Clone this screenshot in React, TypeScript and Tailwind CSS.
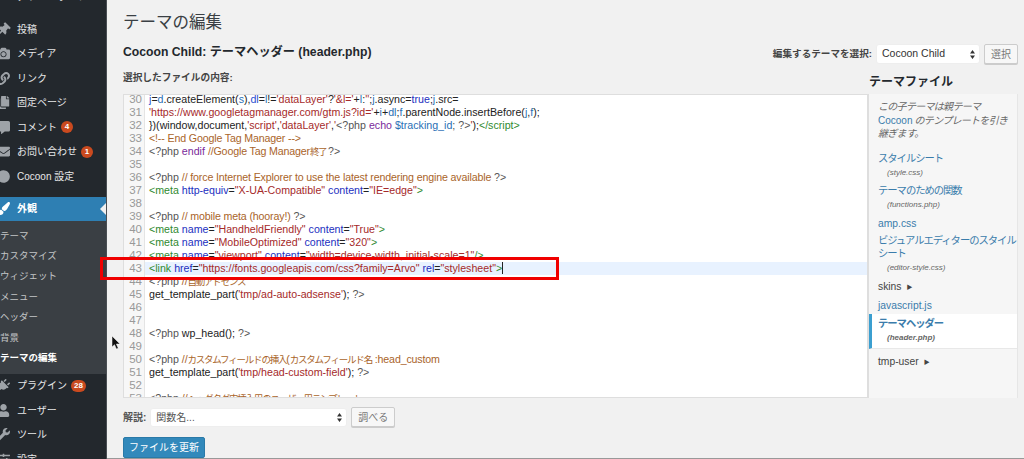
import type { ReactNode } from 'react';
import {
  FaThumbtack,
  FaCamera,
  FaLink,
  FaCopy,
  FaCommentAlt,
  FaEnvelope,
  FaCircle,
  FaPaintBrush,
  FaPlug,
  FaUser,
  FaWrench,
  FaSlidersH,
} from 'react-icons/fa';

// ============================================
// Data
// ============================================

const FONT = "font-['Liberation_Sans','Noto_Sans_CJK_JP',sans-serif]";

type Kind = 'plain' | 'meta' | 'comment' | 'cjk' | 'tag' | 'attr' | 'str' | 'kw' | 'var' | 'def';

const KIND_CLASS: Record<Kind, string> = {
  plain: 'text-[#222]',
  meta: 'text-[#555]',
  comment: 'text-[#a9642a] tracking-[-0.15px]',
  cjk: 'text-[#a9642a] text-[9.5px] tracking-[-1.2px]',
  tag: 'text-[#2f8a2f]',
  attr: 'text-[#1c2fc0]',
  str: 'text-[#a52a2a]',
  kw: 'text-[#7a2a9a]',
  var: 'text-[#2a6fb5]',
  def: 'text-[#2a4fd0]',
};

type Token = [string, Kind];

const CODE: [number, Token[]][] = [
  [30, [['j', 'def'], ['=', 'plain'], ['d', 'var'], ['.createElement(', 'plain'], ['s', 'var'], ['),', 'plain'], ['dl', 'def'], ['=', 'plain'], ['l', 'var'], ['!=', 'plain'], ["'dataLayer'", 'str'], ['?', 'plain'], ["'&l='", 'str'], ['+', 'plain'], ['l', 'var'], [':', 'plain'], ["''", 'str'], [';', 'plain'], ['j', 'var'], ['.async=', 'plain'], ['true', 'attr'], [';', 'plain'], ['j', 'var'], ['.src=', 'plain']]],
  [31, [["'https://www.googletagmanager.com/gtm.js?id='", 'str'], ['+', 'plain'], ['i', 'var'], ['+', 'plain'], ['dl', 'var'], [';', 'plain'], ['f', 'var'], ['.parentNode.insertBefore(', 'plain'], ['j', 'var'], [',', 'plain'], ['f', 'var'], [');', 'plain']]],
  [32, [['})(window,document,', 'plain'], ["'script'", 'str'], [',', 'plain'], ["'dataLayer'", 'str'], [',', 'plain'], ["'", 'str'], ['<?php ', 'meta'], ['echo ', 'kw'], ['$tracking_id', 'var'], ['; ?>', 'meta'], ["'", 'str'], [');', 'plain'], ['</script>', 'tag']]],
  [33, [['<!-- End Google Tag Manager -->', 'comment']]],
  [34, [['<?php ', 'meta'], ['endif ', 'kw'], ['//Google Tag Manager', 'comment'], ['終了 ', 'cjk'], ['?>', 'meta']]],
  [35, []],
  [36, [['<?php ', 'meta'], ['// force Internet Explorer to use the latest rendering engine available ', 'comment'], ['?>', 'meta']]],
  [37, [['<meta ', 'tag'], ['http-equiv', 'attr'], ['=', 'plain'], ['"X-UA-Compatible" ', 'str'], ['content', 'attr'], ['=', 'plain'], ['"IE=edge"', 'str'], ['>', 'tag']]],
  [38, []],
  [39, [['<?php ', 'meta'], ['// mobile meta (hooray!) ', 'comment'], ['?>', 'meta']]],
  [40, [['<meta ', 'tag'], ['name', 'attr'], ['=', 'plain'], ['"HandheldFriendly" ', 'str'], ['content', 'attr'], ['=', 'plain'], ['"True"', 'str'], ['>', 'tag']]],
  [41, [['<meta ', 'tag'], ['name', 'attr'], ['=', 'plain'], ['"MobileOptimized" ', 'str'], ['content', 'attr'], ['=', 'plain'], ['"320"', 'str'], ['>', 'tag']]],
  [42, [['<meta ', 'tag'], ['name', 'attr'], ['=', 'plain'], ['"viewport" ', 'str'], ['content', 'attr'], ['=', 'plain'], ['"width=device-width, initial-scale=1"', 'str'], ['/>', 'tag']]],
  [43, [['<link ', 'tag'], ['href', 'attr'], ['=', 'plain'], ['"https://fonts.googleapis.com/css?family=Arvo" ', 'str'], ['rel', 'attr'], ['=', 'plain'], ['"stylesheet"', 'str'], ['>', 'tag']]],
  [44, [['<?php ', 'meta'], ['//', 'comment'], ['自動アドセンス', 'cjk']]],
  [45, [['get_template_part(', 'plain'], ["'tmp/ad-auto-adsense'", 'str'], ['); ', 'plain'], ['?>', 'meta']]],
  [46, []],
  [47, []],
  [48, [['<?php ', 'meta'], ['wp_head(); ', 'plain'], ['?>', 'meta']]],
  [49, []],
  [50, [['<?php ', 'meta'], ['//', 'comment'], ['カスタムフィールドの挿入', 'cjk'], ['(', 'comment'], ['カスタムフィールド名', 'cjk'], [' :head_custom', 'comment']]],
  [51, [['get_template_part(', 'plain'], ["'tmp/head-custom-field'", 'str'], ['); ', 'plain'], ['?>', 'meta']]],
  [52, []],
  [53, [['<?php ', 'meta'], ['//', 'comment'], ['ヘッダタグ内挿入用のユーザー用テンプレート', 'cjk']]],
];

const SUBMENU = ['テーマ', 'カスタマイズ', 'ウィジェット', 'メニュー', 'ヘッダー', '背景'];

// ============================================
// Sub-components
// ============================================

function Badge({ children }: { children: ReactNode }) {
  return (
    <span className="ml-[4px] flex h-[12px] min-w-[12px] items-center justify-center rounded-full bg-[#ca4a1f] px-[3px] text-[8px] font-bold leading-none text-white">
      {children}
    </span>
  );
}

function MenuItem({ icon, label, badge }: { icon: ReactNode; label: string; badge?: string }) {
  return (
    <div className="flex h-[24.5px] items-center text-[10px] text-[#e6e7e8]">
      <span className="ml-[-3px] flex w-[20px] shrink-0 items-center justify-start text-[13px] text-[#9ea3a8]">
        {icon}
      </span>
      <span className="whitespace-nowrap">{label}</span>
      {badge && <Badge>{badge}</Badge>}
    </div>
  );
}

function Sidebar() {
  return (
    <aside className="flex h-[459px] w-[107px] shrink-0 flex-col overflow-hidden border-r border-[#4a4f54] bg-[#23282d]">
      {/* Row scrolled past the top edge */}
      <div className="mt-[-11px] flex h-[14px] shrink-0 items-center pl-[17px] text-[10px] text-[#e6e7e8]">
        ダッシュボード
      </div>

      <div className="mt-[14px] shrink-0">
        <MenuItem icon={<FaThumbtack className="rotate-45" />} label="投稿" />
        <MenuItem icon={<FaCamera />} label="メディア" />
        <MenuItem icon={<FaLink />} label="リンク" />
        <MenuItem icon={<FaCopy />} label="固定ページ" />
        <MenuItem icon={<FaCommentAlt />} label="コメント" badge="4" />
        <MenuItem icon={<FaEnvelope />} label="お問い合わせ" badge="1" />
        <MenuItem icon={<FaCircle />} label="Cocoon 設定" />
      </div>

      {/* Active menu */}
      <div className="relative mt-[8px] flex h-[24px] shrink-0 items-center bg-[#2e7fb3] text-[10px] font-bold text-white">
        <span className="ml-[-3px] w-[20px] text-[13px]">
          <FaPaintBrush />
        </span>
        外観
        <span className="absolute right-0 top-[6px] h-0 w-0 border-y-[6px] border-r-[6px] border-y-transparent border-r-[#f1f1f1]" />
      </div>

      <div className="flex h-[153px] shrink-0 flex-col bg-[#3a3f44] pt-[5px] text-[9.5px] text-[#c3c5c7]">
        {SUBMENU.map((item) => (
          <div key={item} className="flex h-[20.4px] shrink-0 items-center whitespace-nowrap">
            {item}
          </div>
        ))}
        <div className="flex h-[20.4px] shrink-0 items-center font-bold text-white">テーマの編集</div>
      </div>

      <div className="shrink-0">
        <MenuItem icon={<FaPlug className="rotate-45" />} label="プラグイン" badge="28" />
        <MenuItem icon={<FaUser />} label="ユーザー" />
        <MenuItem icon={<FaWrench />} label="ツール" />
        <MenuItem icon={<FaSlidersH />} label="設定" />
      </div>
    </aside>
  );
}

function Chevrons() {
  return (
    <svg width="5" height="9" viewBox="0 0 5 9" className="shrink-0 text-[#333]">
      <path d="M2.5 0 5 3.4H0zM2.5 9 0 5.6h5z" fill="currentColor" />
    </svg>
  );
}

function CodeEditor() {
  return (
    <div className="h-[304px] min-w-0 flex-1 overflow-hidden border border-[#dedede] bg-white">
      <div className="relative mt-[-2px] text-[10.65px] leading-[13px]">
        {CODE.map(([num, tokens]) => (
          <div key={num} className={`flex h-[13px] whitespace-pre ${num === 43 ? 'bg-[#e8f2ff]' : ''}`}>
            <span className="w-[21px] shrink-0 border-r border-[#e4e4e4] bg-[#f7f7f7] pr-[2px] text-right text-[11.5px] text-[#999]">
              {num}
            </span>
            <span className="pl-[4px]">
              {tokens.map(([text, kind], idx) => (
                <span key={idx} className={KIND_CLASS[kind]}>
                  {text}
                </span>
              ))}
              {num === 43 && <span className="border-r border-[#222]" />}
            </span>
          </div>
        ))}
      </div>
    </div>
  );
}

function FileLink({ name, file }: { name: ReactNode; file: string }) {
  return (
    <div className="mb-[5px]">
      <div className="whitespace-nowrap text-[10.3px] leading-[13px] tracking-[-1px] text-[#3a7cab]">{name}</div>
      <div className="pl-[9px] pt-[1px] text-[8px] italic leading-[13px] text-[#666]">{file}</div>
    </div>
  );
}

function FileList() {
  return (
    <div className="h-[304px] w-[150px] shrink-0 overflow-hidden border-l border-r border-l-[#dedede] border-r-[#e6e6e6] bg-[#f6f6f6]">
      <p className="whitespace-nowrap px-[9px] pt-[6px] text-[10px] italic leading-[13.5px] tracking-[-0.7px] text-[#666]">
        この子テーマは親テーマ
        <br />
        <span className="not-italic tracking-normal text-[#3a7cab]">Cocoon</span> のテンプレートを引き
        <br />
        継ぎます。
      </p>
      <div className="pl-[9px] pt-[11px]">
        <FileLink name="スタイルシート" file="(style.css)" />
        <FileLink name="テーマのための関数" file="(functions.php)" />
        <div className="mb-[4px] mt-[6px] text-[10.3px] leading-[13px] text-[#3a7cab]">amp.css</div>
        <FileLink
          name={
            <>
              ビジュアルエディターのスタイル
              <br />
              シート
            </>
          }
          file="(editor-style.css)"
        />
        <div className="mt-[7px] flex h-[13px] items-center text-[10.3px] text-[#444]">
          skins<span className="ml-[5px] text-[6px]">▶</span>
        </div>
        <div className="mt-[5px] text-[10.3px] leading-[13px] text-[#3a7cab]">javascript.js</div>
      </div>
      <div className="mt-[2px] h-[35px] border-b border-l-[3px] border-b-[#e8e8e8] border-l-[#3b9fd0] bg-white pl-[6px] pt-[3px]">
        <div className="text-[10.3px] font-bold leading-[13px] tracking-[-1px] text-[#3a7cab]">テーマヘッダー</div>
        <div className="pl-[9px] pt-[1px] text-[8px] font-bold italic leading-[13px] text-[#666]">(header.php)</div>
      </div>
      <div className="mt-[7px] flex h-[13px] items-center pl-[9px] text-[10.3px] text-[#444]">
        tmp-user<span className="ml-[5px] text-[6px]">▶</span>
      </div>
    </div>
  );
}

// ============================================
// Main Component
// ============================================

export default function App() {
  return (
    <div className={`${FONT} relative flex h-[459px] w-[1024px] overflow-hidden bg-[#f1f1f1]`}>
      <Sidebar />

      <main className="h-[459px] min-w-0 flex-1 border-b border-[#999] pl-[16px] pr-[6px]">
        <h1 className="pt-[11px] text-[16.5px] font-normal leading-[22px] text-[#3a3f44]">テーマの編集</h1>

        <div className="mt-[2px] flex h-[32px] items-start justify-between">
          <h2 className="pt-[9px] text-[12.2px] font-bold leading-[16px] text-[#23282d]">
            Cocoon Child: テーマヘッダー (header.php)
          </h2>
          <div className="mt-[9px] flex items-center">
            <span className="text-[9.6px] font-bold text-[#444]">編集するテーマを選択:</span>
            <div className="ml-[4px] flex h-[20px] w-[104px] items-center justify-between rounded-[3px] border border-[#eee] bg-white pl-[5px] pr-[4px] text-[10.5px] text-[#333]">
              Cocoon Child
              <Chevrons />
            </div>
            <button className="ml-[4px] h-[20px] w-[34px] rounded-[2px] border border-[#ccc] bg-[#f7f7f7] text-[10px] text-[#777] shadow-[0_1px_0_#ccc]">
              選択
            </button>
          </div>
        </div>

        <div className="flex h-[26px] items-end justify-between">
          <span className="pb-[7px] text-[9.7px] font-bold text-[#444]">選択したファイルの内容:</span>
          <span className="w-[149px] pb-[3px] text-[12px] font-bold leading-[16px] text-[#23282d]">テーマファイル</span>
        </div>

        <div className="mt-[1px] flex">
          <CodeEditor />
          <FileList />
        </div>

        <div className="mt-[8px] flex h-[22px] items-center">
          <span className="text-[10px] font-bold text-[#555]">解説:</span>
          <div className="ml-[4px] flex h-[19px] w-[197px] items-center justify-between rounded-[3px] border border-[#eee] bg-white pl-[5px] pr-[4px] text-[10px] text-[#555]">
            関数名...
            <Chevrons />
          </div>
          <button className="ml-[4px] h-[20px] w-[44px] rounded-[2px] border border-[#ccc] bg-[#f7f7f7] text-[10px] text-[#777] shadow-[0_1px_0_#ccc]">
            調べる
          </button>
        </div>

        <button className="mt-[9px] h-[21px] w-[82px] rounded-[2px] border border-[#2a7aa8] bg-[#3289bb] text-[10px] text-white">
          ファイルを更新
        </button>
      </main>

      {/* Red highlight over line 43 */}
      <div className="absolute left-[100px] top-[257px] h-[23px] w-[459px] border-[3px] border-[#f00000]" />

      {/* Mouse pointer */}
      <svg className="absolute left-[111px] top-[336px]" width="9" height="14" viewBox="0 0 9 14">
        <path d="M1 0v11l2.5-2.3L5.4 13l1.9-.8-1.9-4.2H9z" fill="#111" stroke="#fff" strokeWidth="0.5" />
      </svg>
    </div>
  );
}
